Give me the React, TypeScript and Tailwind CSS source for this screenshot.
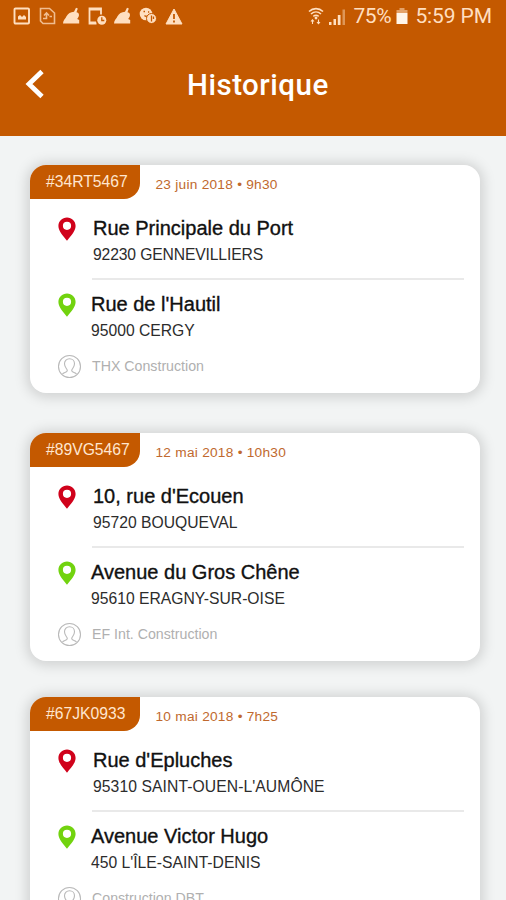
import React from "react";

type Stop = { name: string; city: string; cityClass?: string };
type Trip = {
  id: string;
  date: string;
  from: Stop;
  to: Stop;
  company: string;
};

const trips: Trip[] = [
  {
    id: "#34RT5467",
    date: "23 juin 2018 • 9h30",
    from: { name: "Rue Principale du Port", city: "92230 GENNEVILLIERS", cityClass: "tracking-[-0.14px]" },
    to: { name: "Rue de l'Hautil", city: "95000 CERGY" },
    company: "THX Construction",
  },
  {
    id: "#89VG5467",
    date: "12 mai 2018 • 10h30",
    from: { name: "10, rue d'Ecouen", city: "95720 BOUQUEVAL" },
    to: { name: "Avenue du Gros Chêne", city: "95610 ERAGNY-SUR-OISE" },
    company: "EF Int. Construction",
  },
  {
    id: "#67JK0933",
    date: "10 mai 2018 • 7h25",
    from: { name: "Rue d'Epluches", city: "95310 SAINT-OUEN-L'AUMÔNE", cityClass: "tracking-[0.08px]" },
    to: { name: "Avenue Victor Hugo", city: "450 L'ÎLE-SAINT-DENIS" },
    company: "Construction DBT",
  },
];

function Leaf() {
  return (
    <svg width="19" height="18" viewBox="0 0 19 18" fill="currentColor" className="shrink-0">
      <path d="M1 16.500C1 13.500 3.500 11.500 4.500 9.300C6 6.500 8.500 5 12 4.800L14 .8L15.800 1.600L14.500 5.300C16.800 5.800 17.600 7.500 16.600 9.800L15.200 12L17.200 13V16.500Z" />
    </svg>
  );
}

function StatusBar() {
  return (
    <div className="flex h-8 items-center justify-between pl-[13px] pr-[14px] text-[#ffdfc0]">
      <div className="flex items-center">
        <svg width="18" height="18" viewBox="0 0 18 18" fill="none" stroke="currentColor" strokeWidth="1.900" className="shrink-0">
          <rect x="1.500" y="1.500" width="14.500" height="15" rx="1" />
          <path d="M5 12.500V9.500L7 8L9 10L11 8L13 10V12.500Z" fill="currentColor" stroke="none" />
        </svg>
        <svg width="18" height="18" viewBox="0 0 18 18" fill="none" stroke="currentColor" strokeWidth="1.600" className="ml-2 shrink-0 opacity-75">
          <path d="M1.500 1.500H10.500L15.500 6V16.500H4L1.500 14Z" />
          <path d="M4 11.500H7.500V6.500M5 8.500L7.500 6L10 8.500M13 9.500H10.500" />
        </svg>
        <div className="ml-[5px] flex"><Leaf /></div>
        <svg width="20" height="19" viewBox="0 0 20 19" fill="none" stroke="currentColor" strokeWidth="1.800" className="ml-[7px] shrink-0">
          <path d="M8.500 16.500H1.500V1.500H13V7.500" />
          <path d="M1.500 2.500H13M2 15.500H8" />
          <circle cx="13.800" cy="13.300" r="4.500" fill="currentColor" stroke="none" />
          <path d="M13.800 10.300V13.500H16.300" stroke="#c45900" strokeWidth="1.300" />
        </svg>
        <div className="ml-[5px] flex"><Leaf /></div>
        <svg width="19" height="18" viewBox="0 0 19 18" className="ml-[7px] shrink-0">
          <circle cx="7" cy="7" r="6.300" fill="currentColor" />
          <circle cx="12.500" cy="11.500" r="5" fill="currentColor" stroke="#c45900" strokeWidth="1" />
          <path d="M4.500 4.500H6M9 5H10.200M5.500 8.500C6.500 9.500 7 9.500 8 9M12.500 8.500V14.500M14.500 9.500V12" stroke="#c45900" strokeWidth="1.300" fill="none" />
        </svg>
        <svg width="18" height="17" viewBox="0 0 18 17" className="ml-[7px] shrink-0">
          <path d="M9 1L17 16H1Z" fill="currentColor" stroke="currentColor" strokeLinejoin="round" />
          <path d="M9 6V11M9 12.500V14.500" stroke="#c45900" strokeWidth="1.800" />
        </svg>
      </div>
      <div className="flex items-center font-[Roboto,sans-serif] text-[21px] leading-8">
        <svg width="16" height="18" viewBox="0 0 16 18" fill="none" stroke="currentColor" strokeWidth="1.600" className="shrink-0">
          <path d="M1 4.500C5 0.700 11 0.700 15 4.500M3 7C6 4.300 10 4.300 13 7M5.300 9.300C7 8 9 8 10.700 9.300" />
          <circle cx="8" cy="11" r="1.400" fill="currentColor" stroke="none" />
          <path d="M4.500 17V13M3 14.500L4.500 12.800L6 14.500M10.500 12.500V16.500M9 15L10.500 16.700L12 15" strokeWidth="1.100" />
        </svg>
        <svg width="17" height="17" viewBox="0 0 17 17" fill="currentColor" className="ml-[5px] shrink-0">
          <path d="M0 14H2.500V17H0ZM4.500 11H7V17H4.500ZM8.800 7H11.500V17H8.800Z" />
          <path d="M13.500 1.500H16V17H13.500Z" opacity=".45" />
        </svg>
        <span className="ml-[7px] w-[39px] whitespace-nowrap text-[21px] tracking-[-0.4px]">75%</span>
        <svg width="12" height="18" viewBox="0 0 12 18" className="ml-1 shrink-0">
          <path d="M3.500 1H8.500V3H11.500V6H.5V3H3.500Z" fill="currentColor" opacity=".55" />
          <path d="M.5 6H11.500V17H.5Z" fill="#fff5e9" />
        </svg>
        <span className="ml-[7px] whitespace-nowrap tracking-[-0.1px]">5:59 PM</span>
      </div>
    </div>
  );
}

function Pin({ className }: { className: string }) {
  return (
    <svg width="18" height="24" viewBox="0 0 18 24" className={`shrink-0 ${className}`}>
      <path
        fill="currentColor"
        fillRule="evenodd"
        d="M9 .5C4.200 .5 .4 4.200 .4 8.900C.4 14.500 6 19.500 9 23.700C12 19.500 17.600 14.500 17.600 8.900C17.600 4.200 13.800 .5 9 .5ZM9 4.700A4.100 4.100 0 1 1 9 12.900A4.100 4.100 0 1 1 9 4.700Z"
      />
    </svg>
  );
}

function StopRow({ stop, pin, inset }: { stop: Stop; pin: string; inset: string }) {
  return (
    <div className="flex h-[49px] pl-[28px]">
      <Pin className={pin} />
      <div className={`whitespace-nowrap ${inset}`}>
        <div className="h-6 text-[20px] leading-[23px] text-[#111] [-webkit-text-stroke:0.35px_#111]">{stop.name}</div>
        <div className={`mt-1 h-5 text-[15.700px] leading-5 text-[#2c2c2c] ${stop.cityClass ?? ""}`}>{stop.city}</div>
      </div>
    </div>
  );
}

function TripCard({ trip }: { trip: Trip }) {
  return (
    <article className="h-[228px] shrink-0 overflow-hidden rounded-2xl bg-white shadow-[0_1px_13px_3px_rgba(0,0,0,0.15)]">
      <div className="flex h-[34px]">
        <div className="w-[110px] rounded-br-2xl bg-[#c45900] pl-4 text-[15.700px] leading-[34px] text-[#ffe6d0]">
          {trip.id}
        </div>
        <div className="pl-[15.500px] pt-[3px] text-[13.700px] leading-[34px] tracking-[0.25px] text-[#c0692e]">{trip.date}</div>
      </div>
      <div className="pt-[18px]">
        <StopRow stop={trip.from} pin="text-[#d0021b]" inset="pl-[17px]" />
      </div>
      <div className="ml-[62px] mr-4 mt-3 h-0.5 bg-[#e9e9e9]" />
      <div className="pt-[13px]">
        <StopRow stop={trip.to} pin="text-[#72d30f]" inset="pl-[15px]" />
      </div>
      <div className="mt-3 flex h-6 items-center pl-[27px]">
        <svg width="25" height="25" viewBox="0 0 25 25" fill="none" stroke="#b9b9b9" strokeWidth="1.100" className="shrink-0">
          <circle cx="12.500" cy="12.500" r="11" />
          <path d="M5.500 20C6.500 18.200 10.300 18.600 10.300 16.500C10.300 14.800 7.500 13.500 7.500 9.800C7.500 6.800 9.700 4.800 12.500 4.800C15.300 4.800 17.500 6.800 17.500 9.800C17.500 13.500 14.700 14.800 14.700 16.500C14.700 18.600 18.500 18.200 19.500 20" />
        </svg>
        <span className="pl-[10px] text-[14.200px] leading-5 text-[#b0b0b0]">{trip.company}</span>
      </div>
    </article>
  );
}

export default function App() {
  return (
    <div className="flex h-[900px] w-[506px] flex-col overflow-hidden bg-[#f2f4f4] font-['Liberation_Sans',Arial,sans-serif]">
      <header className="h-[136px] shrink-0 bg-[#c45900]">
        <StatusBar />
        <div className="flex h-[104px] items-center">
          <svg width="20" height="32" viewBox="0 0 20 32" fill="none" stroke="#fff" strokeWidth="4.800" className="ml-[25px] shrink-0">
            <path d="M17 3.500L4 16L17 28.500" />
          </svg>
          <h1 className="ml-[142px] pt-[2px] font-[Roboto,sans-serif] text-[29.500px] font-medium leading-9 tracking-[0.5px] text-white">
            Historique
          </h1>
        </div>
      </header>
      <main className="flex flex-col px-[30px] pr-[26px] pt-[29px]">
        <TripCard trip={trips[0]} />
        <div className="mt-10">
          <TripCard trip={trips[1]} />
        </div>
        <div className="mt-9">
          <TripCard trip={trips[2]} />
        </div>
      </main>
    </div>
  );
}
